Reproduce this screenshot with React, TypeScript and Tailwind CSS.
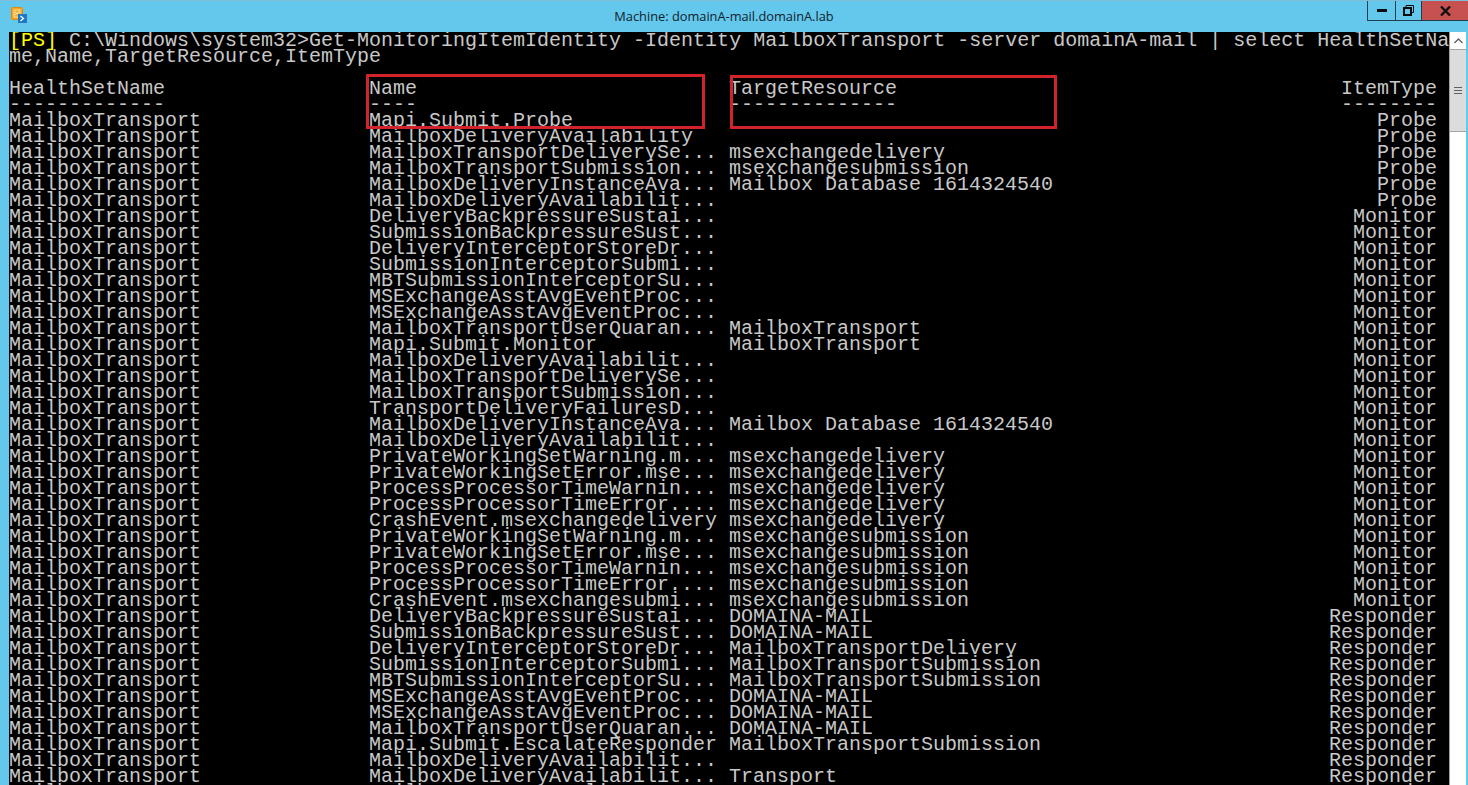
import React from "react";

type Row = [string, string, string];

const DB = "Mailbox Database 1614324540";
const DEL = "msexchangedelivery";
const SUB = "msexchangesubmission";
const HOST = "DOMAINA-MAIL";
const MT = "MailboxTransport";
const MTS = "MailboxTransportSubmission";

const rows: Row[] = [
  ["Mapi.Submit.Probe", "", "Probe"],
  ["MailboxDeliveryAvailability", "", "Probe"],
  ["MailboxTransportDeliverySe...", DEL, "Probe"],
  ["MailboxTransportSubmission...", SUB, "Probe"],
  ["MailboxDeliveryInstanceAva...", DB, "Probe"],
  ["MailboxDeliveryAvailabilit...", "", "Probe"],
  ["DeliveryBackpressureSustai...", "", "Monitor"],
  ["SubmissionBackpressureSust...", "", "Monitor"],
  ["DeliveryInterceptorStoreDr...", "", "Monitor"],
  ["SubmissionInterceptorSubmi...", "", "Monitor"],
  ["MBTSubmissionInterceptorSu...", "", "Monitor"],
  ["MSExchangeAsstAvgEventProc...", "", "Monitor"],
  ["MSExchangeAsstAvgEventProc...", "", "Monitor"],
  ["MailboxTransportUserQuaran...", MT, "Monitor"],
  ["Mapi.Submit.Monitor", MT, "Monitor"],
  ["MailboxDeliveryAvailabilit...", "", "Monitor"],
  ["MailboxTransportDeliverySe...", "", "Monitor"],
  ["MailboxTransportSubmission...", "", "Monitor"],
  ["TransportDeliveryFailuresD...", "", "Monitor"],
  ["MailboxDeliveryInstanceAva...", DB, "Monitor"],
  ["MailboxDeliveryAvailabilit...", "", "Monitor"],
  ["PrivateWorkingSetWarning.m...", DEL, "Monitor"],
  ["PrivateWorkingSetError.mse...", DEL, "Monitor"],
  ["ProcessProcessorTimeWarnin...", DEL, "Monitor"],
  ["ProcessProcessorTimeError....", DEL, "Monitor"],
  ["CrashEvent.msexchangedelivery", DEL, "Monitor"],
  ["PrivateWorkingSetWarning.m...", SUB, "Monitor"],
  ["PrivateWorkingSetError.mse...", SUB, "Monitor"],
  ["ProcessProcessorTimeWarnin...", SUB, "Monitor"],
  ["ProcessProcessorTimeError....", SUB, "Monitor"],
  ["CrashEvent.msexchangesubmi...", SUB, "Monitor"],
  ["DeliveryBackpressureSustai...", HOST, "Responder"],
  ["SubmissionBackpressureSust...", HOST, "Responder"],
  ["DeliveryInterceptorStoreDr...", "MailboxTransportDelivery", "Responder"],
  ["SubmissionInterceptorSubmi...", MTS, "Responder"],
  ["MBTSubmissionInterceptorSu...", MTS, "Responder"],
  ["MSExchangeAsstAvgEventProc...", HOST, "Responder"],
  ["MSExchangeAsstAvgEventProc...", HOST, "Responder"],
  ["MailboxTransportUserQuaran...", HOST, "Responder"],
  ["Mapi.Submit.EscalateResponder", MTS, "Responder"],
  ["MailboxDeliveryAvailabilit...", "", "Responder"],
  ["MailboxDeliveryAvailabilit...", "Transport", "Responder"],
  ["MailboxTransportDeliverySe...", "", "Responder"],
];

const TableRow = ({ a, b, c, d }: { a: string; b: string; c: string; d: string }) => (
  <div className="flex h-4 w-[1428px] whitespace-pre">
    <span className="w-[360px]">{a}</span>
    <span className="w-[360px]">{b}</span>
    <span className="flex-1">{c}</span>
    <span>{d}</span>
  </div>
);

const ConsoleIcon = () => (
  <svg width="16" height="17" viewBox="0 0 16 17">
    <rect x="0.5" y="0.5" width="11" height="12" rx="1" fill="#f6a623" stroke="#e08a16" />
    <path d="M3 3h6v7H3z" fill="none" stroke="#fde3a8" strokeWidth="1" />
    <path d="M4 5l4 3M8 5l-4 3" stroke="#fff2cf" strokeWidth="1" />
    <rect x="7" y="7" width="9" height="9" fill="#1f78c1" />
    <path d="M9.5 9l3 2.5-3 2.5" fill="none" stroke="#fff" strokeWidth="1.2" />
  </svg>
);

const App = () => {
  return (
    <div className="flex h-screen w-full flex-col overflow-hidden border-t border-[#7fbcd6] bg-[#64c8ec]">
      <header className="flex h-[31px] shrink-0 items-start">
        <div className="w-[81px] pl-[11px] pt-[6px]">
          <ConsoleIcon />
        </div>
        <div className="flex-1 pt-[6px] text-center font-['Open_Sans',sans-serif] text-[12.8px] leading-[18px] text-[#10232c]">
          Machine: domainA-mail.domainA.lab
        </div>
        <div className="flex h-5 border-b border-l border-[#1c3f50]">
          <div className="flex w-[28px] items-center justify-center border-r border-[#1c3f50]">
            <div className="h-[3px] w-[10px] bg-[#0c0c0c]" />
          </div>
          <div className="flex w-[26px] items-center justify-center border-r border-[#1c3f50]">
            <svg width="11" height="11" viewBox="0 0 11 11" fill="none" stroke="#0c0c0c">
              <path d="M3 2.5V.5h7.5v7H8.5" />
              <rect x="1" y="3" width="7" height="7" strokeWidth="2" />
            </svg>
          </div>
          <div className="flex w-[46px] items-center justify-center bg-[#c75050]">
            <svg width="11" height="10" viewBox="0 0 11 10" stroke="#111" strokeWidth="2.4">
              <path d="M1 .5l9 9M10 .5l-9 9" />
            </svg>
          </div>
        </div>
      </header>
      <main className="flex min-h-0 flex-1 pl-[9px] pr-[2px]">
        <div className="relative w-[1440px] shrink-0 overflow-hidden bg-black pt-px font-['Liberation_Mono',monospace] text-[20px] leading-4 text-[#c8c8c8]">
          <div className="h-4 whitespace-pre">
            <span className="text-[#ffff00]">[PS]</span>
            {" C:\\Windows\\system32>Get-MonitoringItemIdentity -Identity MailboxTransport -server domainA-mail | select HealthSetNa"}
          </div>
          <div className="h-4 whitespace-pre">me,Name,TargetResource,ItemType</div>
          <div className="h-4" />
          <TableRow a="HealthSetName" b="Name" c="TargetResource" d="ItemType" />
          <TableRow a="-------------" b="----" c="--------------" d="--------" />
          {rows.map(([name, target, type], i) => (
            <TableRow key={i} a="MailboxTransport" b={name} c={target} d={type} />
          ))}
          <div className="absolute left-[357px] top-[42px] h-[55px] w-[339px] border-[3px] border-[#d2232a]" />
          <div className="absolute left-[721px] top-[43px] h-[54px] w-[327px] border-[3px] border-[#d2232a]" />
        </div>
        <aside className="flex w-[17px] shrink-0 flex-col border-l border-[#a0a0a0] bg-white">
          <div className="flex h-[17px] shrink-0 items-center justify-center">
            <svg width="9" height="6" viewBox="0 0 9 6" fill="none" stroke="#606060" strokeWidth="1.3">
              <path d="M.5 5L4.5 1l4 4" />
            </svg>
          </div>
          <div className="flex h-[83px] shrink-0 flex-col items-center justify-center gap-[2px] border-y border-[#a6a6a6] bg-[#dcdcdc]">
            <div className="h-px w-[8px] bg-[#606060]" />
            <div className="h-px w-[8px] bg-[#606060]" />
            <div className="h-px w-[8px] bg-[#606060]" />
          </div>
        </aside>
      </main>
    </div>
  );
};

export default App;
